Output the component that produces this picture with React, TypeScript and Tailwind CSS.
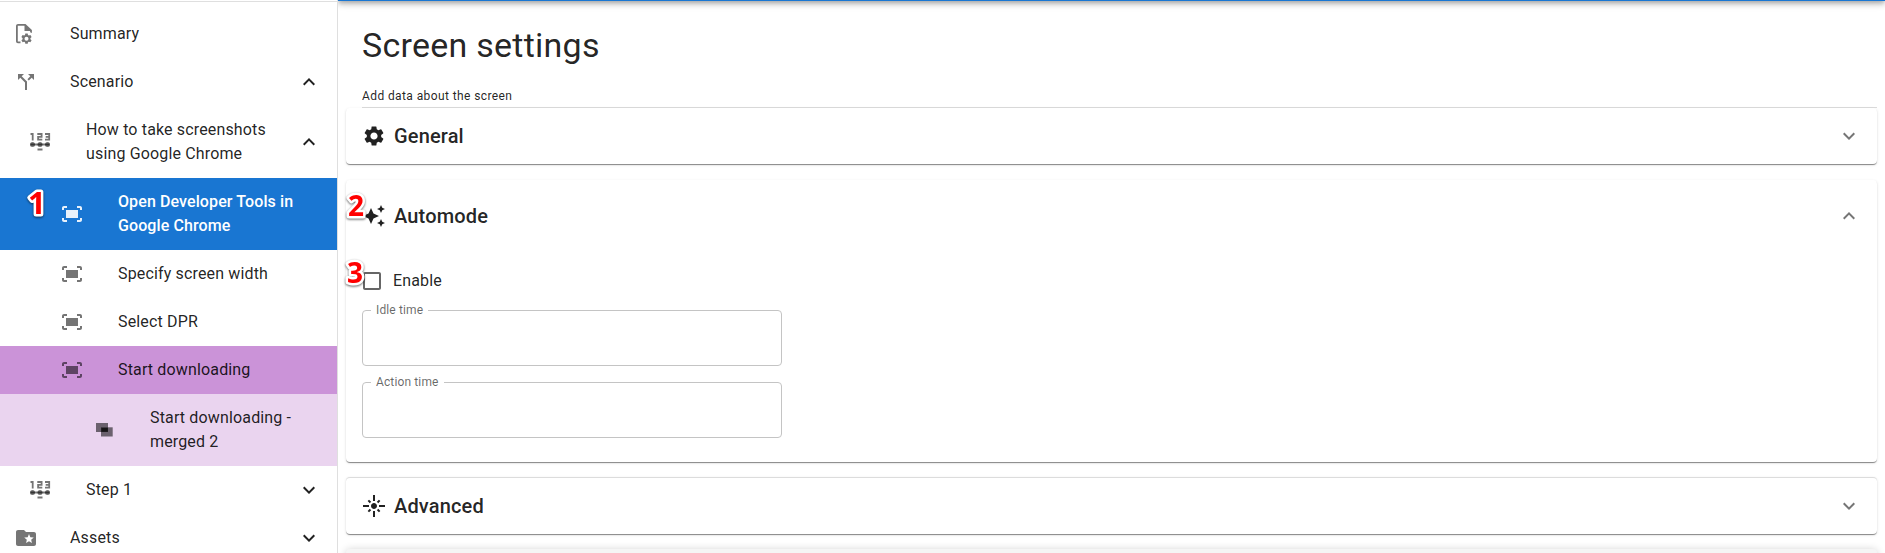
import React from "react";
import {
  MdCallSplit,
  MdExpandLess,
  MdExpandMore,
  MdFitScreen,
  MdFlare,
  MdFolderSpecial,
  MdAutoAwesome,
  MdSettings,
  MdCheckBoxOutlineBlank,
} from "react-icons/md";

function FileSettingsIcon() {
  return (
    <svg viewBox="0 0 24 24" className="size-6" fill="currentColor">
      <path d="M6.500 21.300H4c-1.100 0-2-.9-2-2V4c0-1.100.9-2 2-2h7.500L17.900 8v3l-1.800-.8V9h-5.600V3.800H3.800v15.700h2.700z" />
      <path
        fillRule="evenodd"
        d="M11.300 11.600h2.400l.3 1.500.9.500 1.500-.5 1.200 2-1.200 1.100v1l1.200 1.100-1.200 2-1.500-.5-.9.500-.3 1.500h-2.400l-.3-1.500-.9-.5-1.500.5-1.200-2 1.200-1.100v-1l-1.200-1.100 1.200-2 1.500.5.9-.5zM12.500 14.700a2 2 0 1 0 0 4 2 2 0 0 0 0-4z"
      />
    </svg>
  );
}

function StepsIcon() {
  return (
    <svg viewBox="0 0 24 24" className="size-6" fill="none" stroke="currentColor" strokeWidth="1.800">
      <path d="M2.500 4H4.700v6.500M9.300 4h4.300v2.900h-3.500v2.800h4.200M17 4h4.200v5.700H17M17.700 6.900h3.500" />
      <path d="M2.500 14.500h19M9.500 19.500h5" />
      <g fill="currentColor" stroke="none">
        <circle cx="4.500" cy="14.500" r="2.500" />
        <circle cx="12" cy="14.500" r="2.500" />
        <circle cx="19.500" cy="14.500" r="2.500" />
      </g>
    </svg>
  );
}

function MergedIcon() {
  return (
    <svg viewBox="0 0 24 24" className="size-6" fill="currentColor">
      <path d="M4 5h12v9H4z" />
      <path d="M9 9.300h11.700v9.200H9z" />
      <path d="M9.500 10h6.300v3.700H9.500z" />
    </svg>
  );
}

const indents = ["pl-[14px] gap-8", "pl-[28px] gap-[34px]", "pl-[60px] gap-[34px]", "pl-[92px] gap-[34px]"];

type RowProps = {
  icon: React.ReactNode;
  level: number;
  tone?: string;
  iconTone?: string;
  open?: boolean;
  children: React.ReactNode;
};

function Row({ icon, level, tone = "", iconTone = "text-black/54", open, children }: RowProps) {
  return (
    <div className={`flex items-center py-3 pr-4 whitespace-nowrap ${indents[level]} ${tone}`}>
      <span className={`shrink-0 text-2xl ${iconTone}`}>{icon}</span>
      <span className="min-w-0 grow basis-0">{children}</span>
      {open !== undefined && (
        <span className="shrink-0 text-2xl">{open ? <MdExpandLess /> : <MdExpandMore />}</span>
      )}
    </div>
  );
}

function Sidebar() {
  return (
    <nav className="h-[553px] w-[338px] shrink-0 overflow-hidden border-r border-[#dfdfdf] bg-white">
      <div className="mt-px border-t border-[#dfdfdf] pt-2">
        <Row level={0} icon={<FileSettingsIcon />}>Summary</Row>
        <Row level={0} icon={<MdCallSplit />} open>Scenario</Row>
        <Row level={1} icon={<StepsIcon />} open>
          How to take screenshots<br />using Google Chrome
        </Row>
        <div className="relative">
          <Row
            level={2}
            icon={<MdFitScreen />}
            tone="bg-[#1976d2] font-medium tracking-[0.1px] text-white"
            iconTone="text-white/90"
          >
            Open Developer Tools in<br />Google Chrome
          </Row>
          <Marker className="left-[28px] top-[8px] text-[31px]">1</Marker>
        </div>
        <Row level={2} icon={<MdFitScreen />}>Specify screen width</Row>
        <Row level={2} icon={<MdFitScreen />}>Select DPR</Row>
        <Row level={2} icon={<MdFitScreen />} tone="bg-[#cb93d8]">Start downloading</Row>
        <Row level={3} icon={<MergedIcon />} tone="bg-[#ead4ef]">
          Start downloading -<br />merged 2
        </Row>
        <Row level={1} icon={<StepsIcon />} open={false}>Step 1</Row>
        <Row level={0} icon={<MdFolderSpecial />} open={false}>Assets</Row>
      </div>
    </nav>
  );
}

function Marker({ className, children }: { className: string; children: string }) {
  return (
    <svg className={`absolute h-9 w-6 overflow-visible drop-shadow-[0_1px_1px_rgba(0,0,0,0.6)] ${className}`}>
      <text
        x="0"
        y="28"
        fill="#ff0000"
        stroke="#ffffff"
        strokeWidth="5"
        strokeLinejoin="round"
        paintOrder="stroke"
        className="font-['Open_Sans'] font-bold tracking-normal"
      >
        {children}
      </text>
    </svg>
  );
}

const paper =
  "rounded-sm bg-white shadow-[0_1px_0_0_rgba(0,0,0,0.14),0_2px_1px_-1px_rgba(0,0,0,0.2),0_1px_1px_0_rgba(0,0,0,0.14),0_1px_3px_0_rgba(0,0,0,0.12)]";

function Header({ icon, title, open }: { icon: React.ReactNode; title: string; open?: boolean }) {
  return (
    <div className="flex items-center gap-2 pl-4 pr-4">
      <span className="text-2xl">{icon}</span>
      <h2 className="grow text-xl leading-8 font-medium tracking-[0.15px]">{title}</h2>
      <span className="text-2xl text-black/54">{open ? <MdExpandLess /> : <MdExpandMore />}</span>
    </div>
  );
}

function Field({ label }: { label: string }) {
  return (
    <fieldset className="h-[62px] w-[420px] rounded border border-[#c4c4c4] pl-2">
      <legend className="h-3 px-[5px] text-xs leading-3 tracking-[0.13px] text-black/60">{label}</legend>
    </fieldset>
  );
}

export default function App() {
  return (
    <div className="flex h-[553px] w-[1885px] overflow-hidden bg-white font-[Roboto,sans-serif] text-base tracking-[0.15px] text-black/87">
      <Sidebar />
      <main className="h-[553px] grow overflow-hidden">
        <div className="-mt-[63px] h-16 bg-[#1976d2] shadow-[0_2px_4px_-1px_rgba(0,0,0,0.2),0_4px_5px_0_rgba(0,0,0,0.14),0_1px_10px_0_rgba(0,0,0,0.12)]" />
        <div className="pr-2 pl-2">
          <header className="ml-4 flex h-[107px] flex-col border-b border-[#dcdcdc]">
            <h1 className="mt-[23px] text-[34px] leading-[42px] tracking-[0.25px]">Screen settings</h1>
            <p className="mt-5 text-xs leading-5 tracking-[0.4px]">Add data about the screen</p>
          </header>
          <section className={`flex h-14 flex-col justify-center ${paper}`}>
            <Header icon={<MdSettings />} title="General" />
          </section>
          <section className={`relative mt-4 h-[282px] pt-5 ${paper}`}>
            <Header icon={<MdAutoAwesome />} title="Automode" open />
            <div className="mt-[37px] ml-[14px] flex items-center gap-[9px]">
              <MdCheckBoxOutlineBlank className="size-6 text-black/60" />
              <span>Enable</span>
            </div>
            <div className="mt-[11px] ml-4 flex flex-col gap-[10px]">
              <Field label="Idle time" />
              <Field label="Action time" />
            </div>
            <Marker className="left-[2px] top-[8px] text-[28px]">2</Marker>
            <Marker className="left-[1px] top-[75px] text-[28px]">3</Marker>
          </section>
          <section className={`mt-[15px] flex h-[57px] flex-col justify-center border-t border-[#dcdcdc] ${paper}`}>
            <Header icon={<MdFlare />} title="Advanced" />
          </section>
          <div className="mt-[15px] h-10 rounded-sm bg-[#f5f5f5] shadow-[0_1px_8px_rgba(0,0,0,0.2)]" />
        </div>
      </main>
    </div>
  );
}
